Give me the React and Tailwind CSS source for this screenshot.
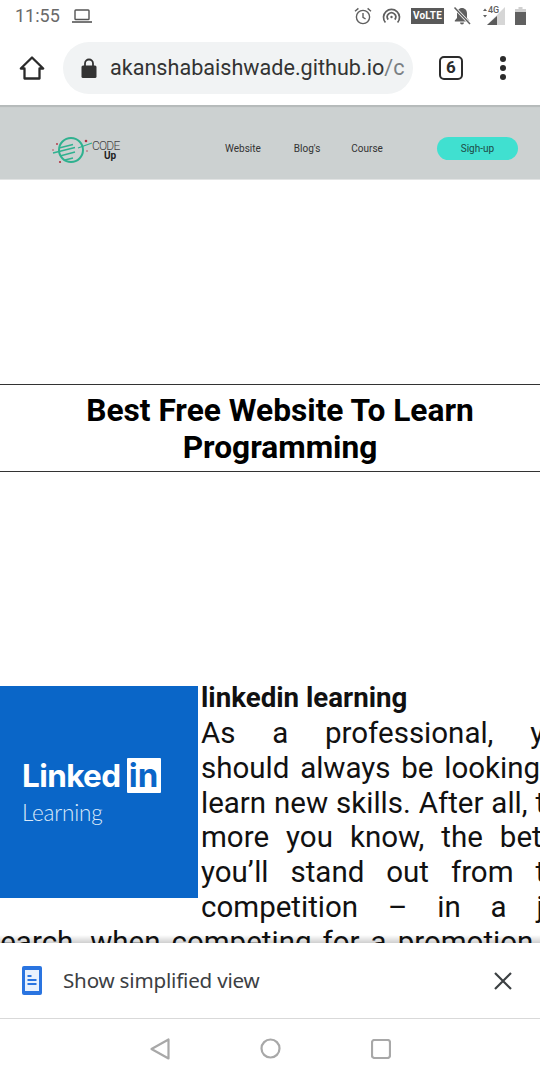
import React from "react";

const font = { fontFamily: "Roboto, sans-serif" };

function StatusIcons() {
  return (
    <div className="flex items-center gap-0">
      <svg width="20" height="20" viewBox="0 0 20 20" fill="none" stroke="#5f5f5f" strokeWidth="1.4" className="mr-[9px]">
        <circle cx="10" cy="11" r="6.6" />
        <path d="M10 7v4.4l2.6 1.6M2 5.2 5.4 2.4M18 5.2 14.6 2.4" />
      </svg>
      <svg width="19" height="18" viewBox="0 0 19 18" fill="none" stroke="#5f5f5f" strokeWidth="1.7" className="mr-[10px]">
        <path d="M3.4 15.5A8 8 0 1 1 15.6 15.5" />
        <path d="M6.2 12.6A4.2 4.2 0 1 1 12.8 12.6" />
        <circle cx="9.5" cy="10" r="1.2" fill="#5f5f5f" stroke="none" />
      </svg>
      <div className="w-[33px] h-[16px] bg-[#595959] text-white text-[10px] font-bold leading-[16px] text-center mr-[8px] tracking-[0.2px]">VoLTE</div>
      <svg width="20" height="20" viewBox="0 0 20 20" className="mr-[8px]">
        <path d="M10 2c-3 0-5 2.300-5 5.500V12l-2.200 2.500v1h14.400v-1L15 12V7.500C15 4.300 13 2 10 2z" fill="#5f5f5f" />
        <path d="M8 16.500a2 2 0 0 0 4 0z" fill="#5f5f5f" />
        <path d="M2.500 1.500 18 18" stroke="#fff" strokeWidth="3" />
        <path d="M2.500 1.500 18 18" stroke="#5f5f5f" strokeWidth="1.500" />
      </svg>
      <div className="relative w-[25px] h-[20px] mr-[10px]">
        <svg width="25" height="20" viewBox="0 0 25 20" className="absolute left-0 top-0">
          <path d="M3 5 5 2.500 7 5zM3 9 5 11.500 7 9z" fill="#5f5f5f" />
          <path d="M25 1V19H7z" fill="#d6d6d6" />
          <path d="M17 10V19H7z" fill="#5a5a5a" />
        </svg>
        <span className="absolute left-[8px] top-[-1px] text-[9px] leading-[10px] text-[#5f5f5f] font-medium">4G</span>
      </div>
      <svg width="11" height="18" viewBox="0 0 11 18">
        <path d="M3.500 0h4v2h3.500v16H0V2h3.500z" fill="#d0d0d0" />
        <path d="M0 5h11v13H0z" fill="#606060" />
      </svg>
    </div>
  );
}

function Toolbar() {
  return (
    <div className="h-[75px] flex items-center shrink-0 bg-white">
      <div className="w-[63px] flex justify-center">
        <svg width="26" height="26" viewBox="0 0 26 26" fill="none" stroke="#2b2b2b" strokeWidth="2.300" strokeLinejoin="round">
          <path d="M1.800 13.500 13 2.500l11.200 11H20.500v10h-15v-10z" />
        </svg>
      </div>
      <div className="w-[350px] h-[52px] rounded-full bg-[#f1f3f4] flex items-center pl-[18px] mt-[1px]">
        <svg width="16" height="21" viewBox="0 0 16 21" className="mr-[13px] shrink-0">
          <path d="M4 8V5.500a4 4 0 0 1 8 0V8" fill="none" stroke="#333" strokeWidth="1.800" />
          <rect x="0.500" y="7.500" width="15" height="12.500" rx="1.500" fill="#333" />
        </svg>
        <span className="text-[21.600px] leading-none text-[#333] whitespace-nowrap">akanshabaishwade.github.io<span className="text-[#7a7f83]">/c</span></span>
      </div>
      <div className="ml-[26px] w-[24px] h-[24px] border-[2.500px] border-[#2b2b2b] rounded-[5px] flex items-center justify-center text-[17px] font-bold text-[#2b2b2b] leading-none">6</div>
      <div className="ml-[37px] flex flex-col gap-[3px]">
        <div className="w-[6px] h-[6px] rounded-full bg-[#2b2b2b]" />
        <div className="w-[6px] h-[6px] rounded-full bg-[#2b2b2b]" />
        <div className="w-[6px] h-[6px] rounded-full bg-[#2b2b2b]" />
      </div>
    </div>
  );
}

function CodeUpLogo() {
  return (
    <div className="w-[68px] h-[36px] relative">
      <svg width="68" height="36" viewBox="0 0 68 36" className="absolute left-0 top-0">
        <circle cx="19" cy="20" r="12" fill="none" stroke="#2fb18f" strokeWidth="2" />
        <path d="M1 23 23 17.500M7 18l14-3.500M8 26l15-4M13 30l8-2M26 18 40 13" stroke="#2fb18f" strokeWidth="1.300" fill="none" />
        <circle cx="34" cy="11" r="1.300" fill="#b03040" />
        <circle cx="5" cy="14" r="0.900" fill="#b03040" />
        <circle cx="1" cy="20" r="0.700" fill="#b03040" />
        <circle cx="8" cy="32" r="1.100" fill="#b03040" />
        <circle cx="35" cy="21" r="0.700" fill="#b03040" />
      </svg>
      <span className="absolute left-[40px] top-[10px] text-[12px] leading-[12px] font-light text-[#444] tracking-[-0.8px]">CODE</span>
      <span className="absolute left-[52px] top-[20px] text-[10px] leading-[12px] font-bold text-[#222]">Up</span>
    </div>
  );
}

function SiteNav() {
  return (
    <div className="shrink-0 h-[75px] bg-[#ccd1d1] flex items-center relative border-b border-[#e2e4e4] pt-[13px] shadow-[inset_0_3px_1px_-1px_#b5baba]">
      <div className="ml-[52px] mt-[-2px]"><CodeUpLogo /></div>
      <span className="ml-[105px] text-[10px] text-[#333]">Website</span>
      <span className="ml-[33px] text-[10px] text-[#333]">Blog's</span>
      <span className="ml-[31px] text-[10px] text-[#333]">Course</span>
      <div className="ml-[54px] w-[81px] h-[23px] rounded-full bg-[#40e0d0] text-[10px] text-[#1d4a45] flex items-center justify-center">Sigh-up</div>
    </div>
  );
}

function Article() {
  return (
    <div className="w-[592px] ml-[-15px] text-[29.500px] leading-[34.800px] text-[#111]">
      <div className="float-left ml-[15px] mr-[3px] mt-[1px] w-[198px] h-[212px] bg-[#0a66c8] flex flex-col pl-[22px] pt-[72px]">
        <div className="flex items-center text-white">
          <span className="text-[31.500px] leading-[35px] font-bold tracking-[-0.6px]" style={{ fontFamily: "Inter, sans-serif" }}>Linked</span>
          <span className="ml-[6px] w-[34px] h-[35px] bg-white text-[#0a66c8] rounded-[1px] flex items-center justify-center text-[33px] font-bold leading-none" style={{ fontFamily: "Inter, sans-serif" }}>in</span>
        </div>
        <span className="mt-[7px] text-[22.500px] leading-[26px] font-light text-[#dbe9f8] tracking-[-0.2px]" style={{ fontFamily: "Lato, sans-serif" }}>Learning</span>
      </div>
      <div className="font-bold text-[27.700px] whitespace-nowrap leading-[26px] mt-[-1px] pb-[5px]">linkedin learning</div>
      <p className="text-justify m-0">
        As a professional, you should always be looking to learn new skills. After all, the more you know, the better you’ll stand out from the competition – in a job search, when competing for a promotion, or when running a business of your own.
      </p>
    </div>
  );
}

export default function App() {
  return (
    <div className="w-[540px] h-[1080px] overflow-hidden flex flex-col bg-white" style={font}>
      <div className="h-[30px] shrink-0 flex items-center justify-between pl-[15px] pr-[14px] pt-[1px]">
        <div className="flex items-center gap-[12px]">
          <span className="text-[18px] leading-none text-[#6a6a6a]">11:55</span>
          <svg width="20" height="14" viewBox="0 0 20 14" fill="none" stroke="#555" strokeWidth="1.400">
            <rect x="3" y="1" width="14" height="9.500" rx="0.800" />
            <path d="M0 13h20" strokeWidth="1.600" />
          </svg>
        </div>
        <StatusIcons />
      </div>
      <Toolbar />
      <SiteNav />
      <div className="flex-1 min-h-0 overflow-hidden relative">
        <div className="h-[204px]" />
        <div className="border-y border-[#333] h-[88px] flex flex-col items-center justify-center pl-[20px] pt-[1px]">
          <h1 className="text-[31.700px] leading-[37px] font-bold text-black text-center w-[420px]">Best Free Website To Learn Programming</h1>
        </div>
        <div className="h-[214px]" />
        <Article />
        <div className="absolute left-0 right-0 bottom-0 h-[8px] bg-gradient-to-b from-transparent to-[#00000030]" />
      </div>
      <div className="h-[75px] shrink-0 bg-white flex items-center border-b border-[#d9d9d9] box-content">
        <svg width="20" height="29" viewBox="0 0 20 29" className="ml-[22px]">
          <rect width="20" height="29" rx="2" fill="#2a74e0" />
          <rect x="3" y="4" width="14" height="21" fill="#e9f1fd" />
          <path d="M5.500 9h4v2h-4zM5.500 13h9v2h-9zM5.500 17h9v2h-9z" fill="#2a74e0" />
        </svg>
        <span className="ml-[21px] text-[20.600px] leading-none text-[#3c4043]" style={{ fontFamily: '"Noto Sans", sans-serif', letterSpacing: "-0.2px" }}>Show simplified view</span>
        <svg width="18" height="18" viewBox="0 0 18 18" className="ml-auto mr-[28px]" stroke="#3c4043" strokeWidth="2.200">
          <path d="M1 1l16 16M17 1 1 17" />
        </svg>
      </div>
      <div className="h-[61px] shrink-0 flex items-center justify-center bg-white pb-[2px]">
        <div className="flex items-center gap-[90px]">
          <svg width="20" height="22" viewBox="0 0 20 22" fill="none" stroke="#a8a8a8" strokeWidth="2.200" strokeLinejoin="round"><path d="M18.500 1.500v19L1.500 11z" /></svg>
          <svg width="21" height="21" viewBox="0 0 21 21" fill="none" stroke="#a8a8a8" strokeWidth="2.200"><circle cx="10.500" cy="10.500" r="9" /></svg>
          <svg width="20" height="20" viewBox="0 0 20 20" fill="none" stroke="#a8a8a8" strokeWidth="2.200"><rect x="1" y="1" width="18" height="18" rx="2.500" /></svg>
        </div>
      </div>
    </div>
  );
}
